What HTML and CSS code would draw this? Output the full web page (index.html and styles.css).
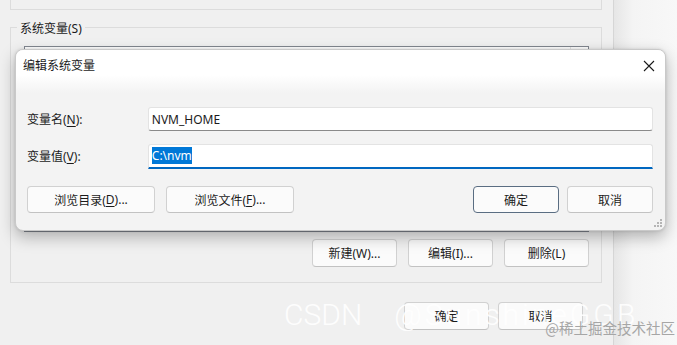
FILE: index.html
```html
<!DOCTYPE html>
<html lang="zh-CN">
<head>
<meta charset="utf-8">
<link rel="stylesheet" href="styles.css">
</head>
<body>
<div class="screen">
  <div class="window">
    <div class="group-top"></div>
    <div class="group">
      <div class="legend">系统变量(S)</div>
      <div class="listbox"><div class="col"></div></div>
      <div class="group-buttons">
        <div class="btn">新建(W)...</div>
        <div class="btn">编辑(I)...</div>
        <div class="btn">删除(L)</div>
      </div>
    </div>
    <div class="window-buttons">
      <div class="btn">确定</div>
      <div class="btn">取消</div>
    </div>
  </div>
  <div class="side"></div>

  <div class="dialog">
    <div class="titlebar">
      <span class="title">编辑系统变量</span>
      <svg class="close" width="12" height="12" viewBox="0 0 12 12"><path d="M1 1 L11 11 M11 1 L1 11" stroke="#1a1a1a" stroke-width="1.1" fill="none"/></svg>
    </div>
    <div class="dbody">
      <div class="row">
        <label class="lbl">变量名(<u>N</u>):</label>
        <div class="input">NVM_HOME</div>
      </div>
      <div class="row">
        <label class="lbl">变量值(<u>V</u>):</label>
        <div class="input focus"><span class="sel">C:\nvm</span></div>
      </div>
      <div class="actions">
        <div class="btn wide">浏览目录(<u>D</u>)...</div>
        <div class="btn wide">浏览文件(<u>F</u>)...</div>
        <div class="spacer"></div>
        <div class="btn primary">确定</div>
        <div class="btn">取消</div>
      </div>
    </div>
    <svg class="grip" width="8" height="8" viewBox="0 0 8 8">
      <g fill="#b5b5b5"><rect x="6" y="0" width="2" height="2"/><rect x="3" y="3" width="2" height="2"/><rect x="6" y="3" width="2" height="2"/><rect x="0" y="6" width="2" height="2"/><rect x="3" y="6" width="2" height="2"/><rect x="6" y="6" width="2" height="2"/></g>
    </svg>
  </div>

  <div class="watermark"><span>CSDN</span><span class="wm-name">@SunshineGGB</span></div>
  <div class="credit">@稀土掘金技术社区</div>
</div>
</body>
</html>
```

FILE: styles.css
```css
* { box-sizing: border-box; }
html, body {
  margin: 0;
  padding: 0;
  width: 677px;
  height: 345px;
  overflow: hidden;
  font-family: "Noto Sans", "Noto Sans CJK SC", sans-serif;
  font-size: 12px;
  color: #1b1b1b;
}
.screen {
  position: relative;
  display: flex;
  width: 677px;
  height: 345px;
  background: #f3f3f3;
}
.window {
  width: 614px;
  height: 345px;
  background: #f0f0f0;
  border-right: 1px solid #d6d6d6;
  display: flex;
  flex-direction: column;
  padding-left: 10px;
}
.side {
  flex: 1;
  background: linear-gradient(to right, #e6e6e6, #f4f4f4 30%, #f8f8f8);
}
.group-top {
  width: 592px;
  height: 10px;
  border: 1px solid #dcdcdc;
  border-top: none;
}
.group {
  position: relative;
  margin-top: 17px;
  width: 592px;
  height: 256px;
  border: 1px solid #dcdcdc;
  display: flex;
  flex-direction: column;
  padding: 18px 12px 0 13px;
}
.legend {
  position: absolute;
  top: -7px;
  left: 6px;
  padding: 0 3px;
  background: #f0f0f0;
  line-height: 16px;
  font-size: 12px;
}
.listbox {
  height: 186px;
  border: 1px solid #828790;
  background: #fff;
  position: relative;
}
.col {
  position: absolute;
  left: 545px;
  top: 0;
  width: 1px;
  height: 20px;
  background: #e5e5e5;
}
.group-buttons {
  display: flex;
  justify-content: flex-end;
  gap: 11px;
  margin-top: 7px;
}
.group-buttons .btn, .window-buttons .btn {
  width: 85px;
  height: 28px;
}
.window-buttons {
  display: flex;
  gap: 9px;
  margin-left: 394px;
  margin-top: 19px;
}
.btn {
  display: flex;
  align-items: center;
  justify-content: center;
  height: 27px;
  width: 86px;
  background: #fbfbfb;
  border: 1px solid #d1d1d1;
  border-bottom-color: #c2c2c2;
  border-radius: 4px;
  font-size: 12px;
  color: #1b1b1b;
  white-space: nowrap;
}
.btn u, .lbl u { text-decoration: underline; text-underline-offset: 2px; }

.dialog {
  position: absolute;
  left: 15px;
  top: 49px;
  width: 651px;
  height: 182px;
  border: 1px solid #c9c9c9;
  border-radius: 8px;
  background: #f3f3f3;
  box-shadow: 0 6px 16px rgba(0,0,0,0.28), 0 0 3px rgba(0,0,0,0.12);
  overflow: hidden;
  display: flex;
  flex-direction: column;
}
.titlebar {
  height: 43px;
  display: flex;
  align-items: flex-start;
  justify-content: space-between;
  padding: 8px 10px 0 7px;
  background: linear-gradient(to bottom, #ffffff 0, #ffffff 25px, #f3f3f3 43px);
}
.title { font-size: 12px; line-height: 16px; }
.close { margin-top: 2px; }
.dbody {
  display: flex;
  flex-direction: column;
  padding: 14px 12px 0 11px;
}
.row {
  display: flex;
  align-items: center;
  height: 24px;
  margin-bottom: 13px;
}
.lbl { width: 121px; font-size: 12px; }
.input {
  width: 506px;
  height: 24px;
  background: #fff;
  border: 1px solid #e3e3e3;
  border-bottom-color: #8a8a8a;
  border-radius: 3px;
  padding: 0 3px;
  display: flex;
  align-items: center;
  font-size: 12px;
}
.input.focus {
  height: 25px;
  border-bottom: 2px solid #0067c0;
  border-radius: 3px 3px 0 0;
}
.sel {
  background: #0078d7;
  color: #fff;
  line-height: 17px;
}
.actions {
  display: flex;
  align-items: center;
  gap: 11px;
  margin-top: 5px;
}
.btn.wide { width: 128px; height: 27px; }
.spacer { flex: 1; }
.btn.primary { border-color: #5a6d82; margin-right: -3px; }
.grip { position: absolute; right: 3px; bottom: 3px; }

.watermark {
  position: absolute;
  left: 284px;
  top: 297px;
  display: flex;
  gap: 32px;
  font-family: "Roboto", "Liberation Sans", sans-serif;
  font-weight: 300;
  font-size: 30px;
  color: rgba(255,255,255,0.9);
  white-space: nowrap;
}
.wm-name { letter-spacing: 3px; }
.credit {
  position: absolute;
  right: 2px;
  top: 317px;
  font-family: "Noto Sans CJK SC", sans-serif;
  font-size: 14.5px;
  color: #a6a6a6;
  white-space: nowrap;
}
```
